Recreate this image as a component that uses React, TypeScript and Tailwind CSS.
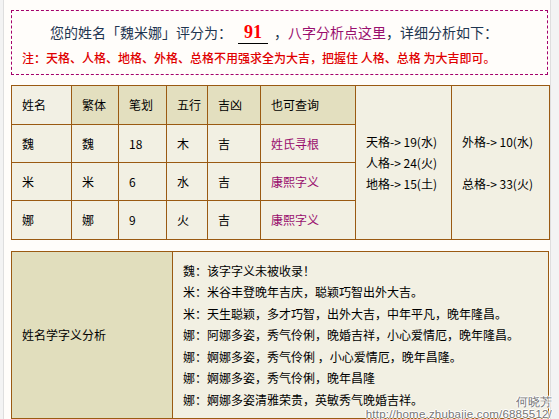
const rows = [
  { name: "魏", trad: "魏", strokes: "18", wx: "木", jx: "吉", link: "姓氏寻根" },
  { name: "米", trad: "米", strokes: "6", wx: "水", jx: "吉", link: "康熙字义" },
  { name: "娜", trad: "娜", strokes: "9", wx: "火", jx: "吉", link: "康熙字义" },
];

const meanings = [
  "魏：该字字义未被收录！",
  "米：米谷丰登晚年吉庆，聪颖巧智出外大吉。",
  "米：天生聪颖，多才巧智，出外大吉，中年平凡，晚年隆昌。",
  "娜：阿娜多姿，秀气伶俐，晚婚吉祥，小心爱情厄，晚年隆昌。",
  "娜：婀娜多姿，秀气伶俐 ，小心爱情厄，晚年昌隆。",
  "娜：婀娜多姿，秀气伶俐，晚年昌隆",
  "娜：婀娜多姿清雅荣贵，英敏秀气晚婚吉祥。",
];

const cell = "border border-[#9a5a12] px-[10px] text-left font-normal whitespace-nowrap";

export default function App() {
  return (
    <div
      className="relative min-h-[419px] overflow-hidden bg-[#f3f3f3] text-[12px] text-black"
      style={{ fontFamily: '"Noto Sans CJK SC", "Noto Sans", sans-serif' }}
    >
      <div className="ml-[3px] w-[548px] min-h-[419px] border-x border-[#dedede] bg-[#fffdfa] pl-[7px] pt-[10px]">
        {/* score box */}
        <div className="h-[65px] w-[537px] border border-dashed border-[#a3006b] pt-[9px]">
          <div className="flex h-[24px] items-center pl-[38px] text-[14px] text-[#1e3550]">
            <span>您的姓名「魏米娜」评分为：</span>
            <span
              className="mx-[6px] border-b border-black px-[6px] text-[18px] font-bold leading-[22px] text-[#ff0000]"
              style={{ fontFamily: '"Liberation Serif", serif' }}
            >
              91
            </span>
            <span>，</span>
            <span className="text-[#990f6e]">八字分析点这里</span>
            <span>，详细分析如下：</span>
          </div>
          <div className="mt-[6px] pl-[10px] text-[12px] font-medium leading-[16px] text-[#e00000]">
            注：天格、人格、地格、外格、总格不用强求全为大吉，把握住 人格、总格 为大吉即可。
          </div>
        </div>

        {/* main table */}
        <table className="mt-[10px] w-[538px] table-fixed border-collapse bg-[#f2f0e3]">
          <colgroup>
            <col className="w-[60px]" />
            <col className="w-[47px]" />
            <col className="w-[48px]" />
            <col className="w-[41px]" />
            <col className="w-[53px]" />
            <col className="w-[95px]" />
            <col className="w-[96px]" />
            <col className="w-[98px]" />
          </colgroup>
          <tbody>
            <tr className="h-[39px]">
              <th className={`${cell} bg-[#f2f0e4]`}>姓名</th>
              <th className={`${cell} bg-[#e3dfbf]`}>繁体</th>
              <th className={`${cell} bg-[#e3dfbf]`}>笔划</th>
              <th className={`${cell} bg-[#e3dfbf]`}>五行</th>
              <th className={`${cell} bg-[#e3dfbf]`}>吉凶</th>
              <th className={`${cell} bg-[#e3dfbf] text-center`}>也可查询</th>
              <td rowSpan={4} className={`${cell} leading-[21px]`}>
                <div>天格-&gt; 19(水)</div>
                <div>人格-&gt; 24(火)</div>
                <div>地格-&gt; 15(土)</div>
              </td>
              <td rowSpan={4} className={`${cell} leading-[21px]`}>
                <div>外格-&gt; 10(水)</div>
                <div>&nbsp;</div>
                <div>总格-&gt; 33(火)</div>
              </td>
            </tr>
            {rows.map((r, i) => (
              <tr key={i} className={i === 2 ? "h-[39px]" : "h-[38px]"}>
                <td className={`${cell} font-bold`}>{r.name}</td>
                <td className={cell}>{r.trad}</td>
                <td className={cell}>{r.strokes}</td>
                <td className={cell}>{r.wx}</td>
                <td className={cell}>{r.jx}</td>
                <td className={`${cell} text-[#990f6e]`}>{r.link}</td>
              </tr>
            ))}
          </tbody>
        </table>

        {/* meaning table */}
        <table className="mt-[11px] w-[538px] table-fixed border-collapse bg-[#f2f0e3]">
          <colgroup>
            <col className="w-[161px]" />
            <col />
          </colgroup>
          <tbody>
            <tr className="h-[167px]">
              <td className={`${cell} bg-[#e1debd]`}>姓名学字义分析</td>
              <td className={`${cell} py-[7px] leading-[21.5px]`}>
                {meanings.map((m, i) => (
                  <div key={i}>{m}</div>
                ))}
              </td>
            </tr>
          </tbody>
        </table>
      </div>

      {/* watermark */}
      <div
        className="absolute right-[7px] top-[396px] whitespace-nowrap text-right text-[11.5px] leading-[12px] text-[#777]"
        style={{
          fontFamily: '"Liberation Sans", sans-serif',
          textShadow: "1px 0 #fff, -1px 0 #fff, 0 1px #fff, 0 -1px #fff",
        }}
      >
        <div>何晓芳</div>
        <div className="tracking-[0.2px]">http://home.zhubajie.com/6885512/</div>
      </div>
    </div>
  );
}
